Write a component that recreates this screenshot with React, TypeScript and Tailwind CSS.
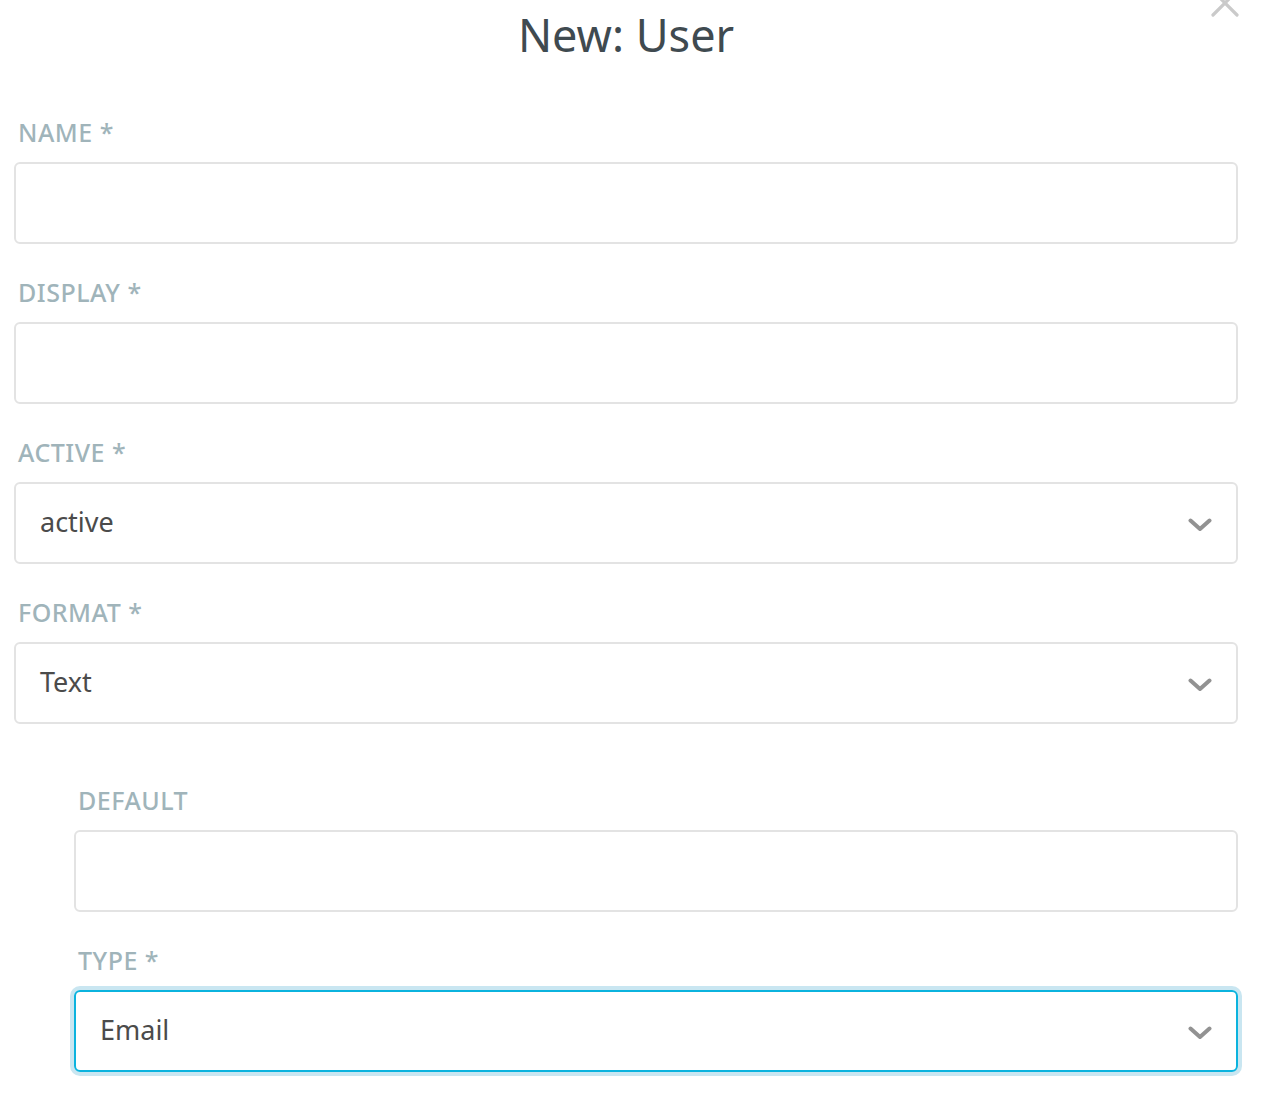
type FieldProps = {
  label: string;
  required?: boolean;
  value?: string;
  select?: boolean;
  focused?: boolean;
};

const Chevron = () => (
  <svg viewBox="0 0 24 14" className="w-[24px] h-[14px] mt-[4px]" fill="none">
    <polyline
      points="2.5,2.5 12,11 21.5,2.5"
      stroke="#929292"
      strokeWidth="4"
      strokeLinecap="round"
      strokeLinejoin="round"
    />
  </svg>
);

const Field = ({ label, required, value, select, focused }: FieldProps) => (
  <div className="flex flex-col">
    <label className="px-[4px] text-[25px] leading-[32px] font-medium uppercase tracking-[0.02em] text-[#a0b4ba]">
      {label}
      {required && <span> *</span>}
    </label>
    <div
      className={
        "mt-[14px] h-[82px] rounded-[6px] border-2 flex items-center justify-between pl-[24px] pr-[24px] " +
        (focused
          ? "border-[#0bb3de] ring-4 ring-[#c9e6f1]"
          : "border-[#e3e3e3]")
      }
    >
      <span className="text-[27px] leading-[34px] mb-[3px] text-[#4b4b4b]">{value}</span>
      {select && <Chevron />}
    </div>
  </div>
);

export default function App() {
  return (
    <div
      className="relative min-h-[1096px] bg-white pl-[14px] pr-[24px]"
      style={{ fontFamily: '"Noto Sans", "Open Sans", sans-serif' }}
    >
      <button className="absolute right-[22px] top-[-12px] text-[#cacaca]">
        <svg viewBox="0 0 30 30" className="w-[30px] h-[30px]" fill="none">
          <path d="M3 3 L27 27 M27 3 L3 27" stroke="currentColor" strokeWidth="3.2" strokeLinecap="round" />
        </svg>
      </button>
      <h1 className="pt-[8px] text-center text-[45px] leading-[54px] text-[#3f4a50]">
        New: User
      </h1>
      <div className="mt-[54px] flex flex-col gap-[32px]">
        <Field label="Name" required />
        <Field label="Display" required />
        <Field label="Active" required value="active" select />
        <Field label="Format" required value="Text" select />
      </div>
      <div className="mt-[60px] pl-[60px] flex flex-col gap-[32px]">
        <Field label="Default" />
        <Field label="Type" required value="Email" select focused />
      </div>
    </div>
  );
}
